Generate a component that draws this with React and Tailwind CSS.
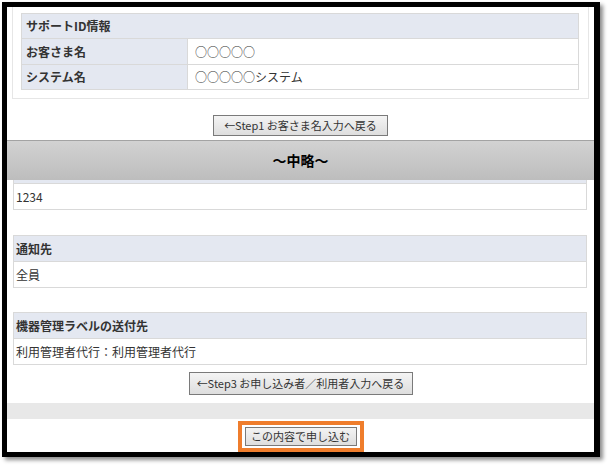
import React from 'react';

const font = { fontFamily: '"Noto Sans CJK JP", "Noto Sans", sans-serif' };

const OldButton = ({ children, className = '' }) => (
    <button
        className={`border border-[#7a7a7a] bg-gradient-to-b from-[#f4f4f4] to-[#dedede] text-[11px] leading-none text-[#333] whitespace-nowrap px-0 flex items-center justify-center ${className}`}
    >
        {children}
    </button>
);

// lower section: one header row + one value row
const InfoBlock = ({ title, value, className = '' }) => (
    <div className={`border border-[#d9d9d9] text-[12px] text-[#333] ${className}`}>
        {title && (
            <div className="h-[26px] bg-[#e4e8f1] border-b border-[#d9d9d9] flex items-center px-[2px] font-bold">
                {title}
            </div>
        )}
        <div className="h-[25px] bg-white flex items-center px-[2px]">{value}</div>
    </div>
);

const App = () => {
    return (
        <div className="w-[608px] h-[465px] bg-white pt-[2px] pl-[2px]" style={font}>
            <div className="w-[598px] h-[455px] border-black border-t-[5px] border-l-[5px] border-r-[6px] border-b-[5px] bg-white shadow-[3px_3px_4px_rgba(0,0,0,0.45)] overflow-hidden flex flex-col">
                {/* support id panel (top is scrolled off) */}
                <div className="ml-[5px] w-[577px] border border-t-0 border-[#e6e6e6] pt-[6px] pb-[8px] pl-[8px] pr-[9px]">
                    <div className="border border-[#d9d9d9] text-[12px] text-[#333]">
                        <div className="h-[25px] bg-[#e4e8f1] border-b border-[#d9d9d9] flex items-center pl-[4px] font-bold">
                            サポートID情報
                        </div>
                        <div className="flex h-[26px] border-b border-[#d9d9d9]">
                            <div className="w-[166px] bg-[#e4e8f1] border-r border-[#d9d9d9] flex items-center pl-[4px] font-bold">
                                お客さま名
                            </div>
                            <div className="flex-1 bg-white flex items-center pl-[7px]">○○○○○</div>
                        </div>
                        <div className="flex h-[24px]">
                            <div className="w-[166px] bg-[#e4e8f1] border-r border-[#d9d9d9] flex items-center pl-[4px] font-bold">
                                システム名
                            </div>
                            <div className="flex-1 bg-white flex items-center pl-[7px]">○○○○○システム</div>
                        </div>
                    </div>
                </div>

                <div className="flex justify-center mt-[16px]">
                    <OldButton className="h-[21px] w-[175px]">←Step1 お客さま名入力へ戻る</OldButton>
                </div>

                {/* omitted section */}
                <div className="mt-[4px] h-[40px] border-t border-[#a3a3a3] bg-gradient-to-b from-[#d2d2d2] to-[#bdbdbd] flex items-center justify-center">
                    <span className="text-[14px] font-bold text-black">～中略～</span>
                </div>

                <div className="ml-[6px] w-[574px] border border-t-0 border-[#d9d9d9] text-[12px] text-[#333]">
                    <div className="h-[4px] bg-[#e4e8f1] border-b border-[#d9d9d9]" />
                    <div className="h-[25px] bg-white flex items-center px-[2px]">1234</div>
                </div>

                <InfoBlock className="ml-[6px] w-[574px] mt-[25px]" title="通知先" value="全員" />
                <InfoBlock
                    className="ml-[6px] w-[574px] mt-[24px]"
                    title="機器管理ラベルの送付先"
                    value="利用管理者代行：利用管理者代行"
                />

                <div className="flex justify-center mt-[7px]">
                    <OldButton className="h-[23px] w-[224px]">←Step3 お申し込み者／利用者入力へ戻る</OldButton>
                </div>

                <div className="mt-[8px] h-[16px] bg-[#e8e8e8]" />

                <div className="flex justify-center mt-[2px] flex-1">
                    <div className="w-[126px] h-full border-[4px] border-[#ef7d2c] flex items-center justify-center">
                        <OldButton className="h-[19px] w-[112px]">この内容で申し込む</OldButton>
                    </div>
                </div>
            </div>
        </div>
    );
};

export default App;
